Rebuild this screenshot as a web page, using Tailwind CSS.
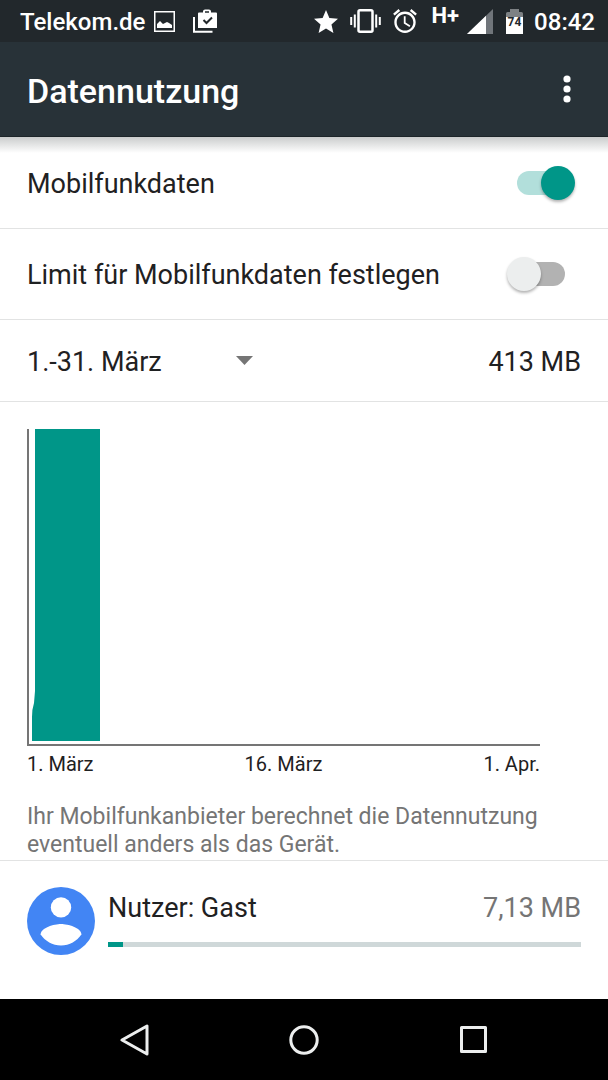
<!DOCTYPE html>
<html lang="de">
<head>
<meta charset="utf-8">
<meta name="viewport" content="width=device-width, initial-scale=1">
<title>Datennutzung</title>
<script src="https://cdn.jsdelivr.net/npm/@tailwindcss/browser@4"></script>
</head>
<body class="flex min-h-screen flex-col bg-white font-['Roboto',sans-serif] text-[27px] leading-8 text-[#1f2122]">

<!-- Status bar -->
<div class="flex h-[42px] items-center justify-between bg-[#22282c] pl-5 pr-[13px] text-2xl font-medium leading-none text-white">
  <div class="flex items-center">
    <span class="pt-[2px]">Telekom.de</span>
    <svg class="ml-[9px]" width="21" height="21" viewBox="0 0 21 21" aria-hidden="true"><rect x="0.75" y="0.75" width="19.5" height="19.5" fill="none" stroke="#fff" stroke-width="1.5"/><path d="M3 17v-4l3-3 3 3 2-1 2-1 2 1 3 2v3z" fill="#fff"/></svg>
    <svg class="ml-[18px]" width="24" height="24" viewBox="0 0 24 24" aria-hidden="true"><path d="M1 8v14.700h18.500" fill="none" stroke="#fff" stroke-width="2"/><path d="M5 4.500a1 1 0 0 1 1-1h4V2.500C10 1.200 11 .5 12 .5h4c1 0 2 .7 2 2v1h5a1 1 0 0 1 1 1V19H5zM12 2.200v1.600h4V2.200z" fill="#fff" fill-rule="evenodd"/><path d="M10.500 11l3 3 5.500-5.500" fill="none" stroke="#22282c" stroke-width="2"/></svg>
  </div>
  <div class="flex items-center">
    <svg width="24" height="23" viewBox="2 2 20 19" aria-hidden="true"><path d="M12 17.270L18.180 21l-1.640-7.030L22 9.240l-7.190-.61L12 2 9.190 8.630 2 9.240l5.460 4.730L5.820 21z" fill="#fff"/></svg>
    <svg class="ml-3" width="31" height="24" viewBox="0 0 31 24" fill="none" stroke="#fff" aria-hidden="true"><rect x="8.500" y="1.250" width="14" height="21.500" rx="1.500" stroke-width="2.500"/><path d="M1.200 8v8M4.800 5.500v13M26.200 5.500v13M29.800 8v8" stroke-width="2"/></svg>
    <svg class="ml-3" width="24" height="24" viewBox="2 1.800 20 20.200" fill="#fff" aria-hidden="true"><path d="M22 5.720l-4.600-3.860-1.290 1.530 4.600 3.860L22 5.720zM7.880 3.390L6.600 1.860 2 5.710l1.290 1.530 4.590-3.850zM12.500 8H11v6l4.750 2.850.75-1.230-4-2.370V8zM12 4c-4.970 0-9 4.030-9 9s4.020 9 9 9c4.970 0 9-4.030 9-9s-4.030-9-9-9zm0 16c-3.870 0-7-3.130-7-7s3.130-7 7-7 7 3.130 7 7-3.130 7-7 7z"/></svg>
    <span class="ml-[15px] mb-[10px] text-[22px] font-bold leading-none">H+</span>
    <svg class="ml-2" width="26" height="25" viewBox="0 0 26 25" aria-hidden="true"><path d="M26 0v25H0z" fill="#70757a"/><path d="M19 6.700V25H0z" fill="#fff"/></svg>
    <svg class="ml-[13px]" width="17" height="25" viewBox="0 0 17 25" aria-hidden="true"><path d="M0 4.500A1.500 1.500 0 0 1 1.500 3H4V0h9v3h2.500A1.500 1.500 0 0 1 17 4.500V9H0z" fill="#7d8184"/><path d="M0 8h17v17H0z" fill="#fff"/><text x="8.500" y="17" text-anchor="middle" font-family="Roboto" font-weight="700" font-size="12" fill="#22282c">74</text></svg>
    <span class="ml-[11px] pt-[2px]">08:42</span>
  </div>
</div>

<!-- App bar -->
<header class="flex h-[95px] items-center justify-between border-b border-[#1d2529] bg-[#283238] pl-[27px] pr-[21px] text-white">
  <h1 class="pt-1 text-[34px] font-medium leading-10">Datennutzung</h1>
  <button type="button" aria-label="Weitere Optionen" class="flex h-12 w-10 items-center justify-center">
    <svg width="8" height="28" viewBox="0 0 8 28" fill="#fff" aria-hidden="true"><circle cx="4" cy="4" r="3.600"/><circle cx="4" cy="14" r="3.600"/><circle cx="4" cy="24" r="3.600"/></svg>
  </button>
</header>

<main class="flex-1">
  <label class="flex h-[92px] items-center justify-between border-b border-[#e2e3e3] bg-linear-to-b from-[#cbcdcd] to-white bg-[length:100%_16px] bg-no-repeat pl-[27px] pr-[33px]">
    <span class="pt-[2px]">Mobilfunkdaten</span>
    <input type="checkbox" role="switch" checked class="relative h-[34px] w-[68px] shrink-0 appearance-none before:absolute before:inset-x-[10px] before:top-[5px] before:h-6 before:rounded-full before:bg-[#b2b2b2] after:absolute after:left-0 after:top-0 after:size-[34px] after:rounded-full after:bg-[#eceeee] after:shadow-[0_2px_3px_rgba(0,0,0,0.3)] checked:before:bg-[#b2dfdb] checked:after:left-[34px] checked:after:bg-[#009688]">
  </label>

  <label class="flex h-[91px] items-center justify-between border-b border-[#e2e3e3] pl-[27px] pr-[33px]">
    <span class="pt-[2px]">Limit für Mobilfunkdaten festlegen</span>
    <input type="checkbox" role="switch" class="relative h-[34px] w-[68px] shrink-0 appearance-none before:absolute before:inset-x-[10px] before:top-[5px] before:h-6 before:rounded-full before:bg-[#b2b2b2] after:absolute after:left-0 after:top-0 after:size-[34px] after:rounded-full after:bg-[#eceeee] after:shadow-[0_2px_3px_rgba(0,0,0,0.3)] checked:before:bg-[#b2dfdb] checked:after:left-[34px] checked:after:bg-[#009688]">
  </label>

  <div class="flex h-[82px] items-center justify-between border-b border-[#e2e3e3] px-[27px]">
    <div class="relative flex items-center">
      <select aria-label="Abrechnungszeitraum" class="w-[234px] appearance-none bg-transparent pt-[2px]">
        <option>1.-31. März</option>
      </select>
      <svg class="pointer-events-none absolute right-2" width="17" height="9" viewBox="0 0 17 9" aria-hidden="true"><path d="M0 0h17L8.500 9z" fill="#757575"/></svg>
    </div>
    <span class="pt-[2px]">413 MB</span>
  </div>

  <!-- Usage chart -->
  <figure class="ml-[27px] mr-[68px] pt-[27px]">
    <svg class="block h-[317px] w-full" viewBox="0 0 513 317" preserveAspectRatio="none" role="img" aria-label="Datennutzung im März">
      <path d="M1 0v316h512" fill="none" stroke="#757575" stroke-width="2"/>
      <path d="M8 0h65v312H5v-24q0-8 2-14l1-12z" fill="#009688"/>
    </svg>
    <figcaption class="mt-[6px] grid grid-cols-3 text-xl leading-6">
      <span>1. März</span><span class="text-center">16. März</span><span class="text-right">1. Apr.</span>
    </figcaption>
  </figure>

  <p class="mt-[27px] border-b border-[#e2e3e3] pl-[27px] pr-[27px] pb-px text-[23px] leading-7 text-[#757575]">Ihr Mobilfunkanbieter berechnet die Datennutzung eventuell anders als das Gerät.</p>

  <!-- Usage per user -->
  <div class="flex items-start px-[27px] pt-[26px]">
    <svg class="size-[68px] shrink-0" viewBox="2 2 20 20" aria-hidden="true"><circle cx="12" cy="12" r="10" fill="#4285f4"/><circle cx="12" cy="8" r="3" fill="#fff"/><path d="M12 19.200c-2.500 0-4.710-1.280-6-3.220.03-1.990 4-3.080 6-3.080s5.970 1.090 6 3.080c-1.290 1.940-3.500 3.220-6 3.220z" fill="#fff"/></svg>
    <div class="ml-[13px] flex-1 pt-[5px]">
      <div class="flex justify-between">
        <span id="user">Nutzer: Gast</span>
        <span class="text-[#757575]">7,13 MB</span>
      </div>
      <progress aria-labelledby="user" value="3.100" max="100" class="mt-[18px] block h-[5px] w-full appearance-none [&::-webkit-progress-bar]:bg-[#cfd8d9] [&::-webkit-progress-value]:bg-[#009688]"></progress>
    </div>
  </div>
</main>

<!-- System navigation -->
<nav class="grid h-[81px] grid-cols-3 bg-black px-[50px]" aria-label="Systemnavigation">
  <button type="button" aria-label="Zurück" class="flex items-center justify-center"><svg width="30" height="32" viewBox="0 0 30 32" fill="none" stroke="#eceeee" stroke-width="3" stroke-linejoin="round" aria-hidden="true"><path d="M27 2v28L2 16z"/></svg></button>
  <button type="button" aria-label="Startbildschirm" class="flex items-center justify-center"><svg width="30" height="30" viewBox="0 0 30 30" fill="none" stroke="#eceeee" stroke-width="3" aria-hidden="true"><circle cx="15" cy="15" r="13.200"/></svg></button>
  <button type="button" aria-label="Übersicht" class="flex items-center justify-center"><svg width="27" height="27" viewBox="0 0 27 27" fill="none" stroke="#eceeee" stroke-width="3" stroke-linejoin="round" aria-hidden="true"><rect x="1.500" y="1.500" width="24" height="24"/></svg></button>
</nav>
</body>
</html>
